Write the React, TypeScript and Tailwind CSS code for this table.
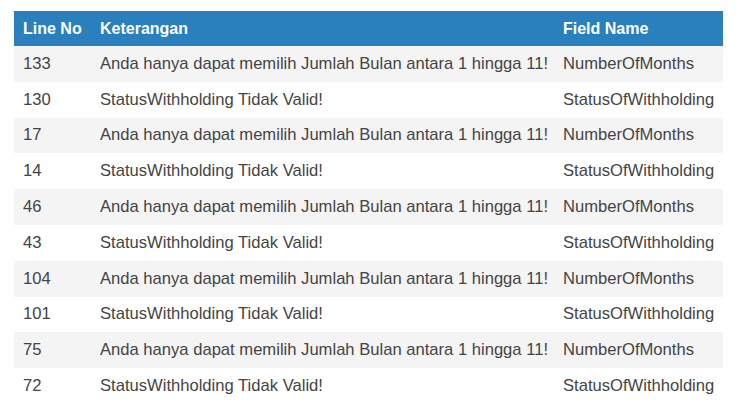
import React from "react";

const rows: [string, string, string][] = [
  ["133", "Anda hanya dapat memilih Jumlah Bulan antara 1 hingga 11!", "NumberOfMonths"],
  ["130", "StatusWithholding Tidak Valid!", "StatusOfWithholding"],
  ["17", "Anda hanya dapat memilih Jumlah Bulan antara 1 hingga 11!", "NumberOfMonths"],
  ["14", "StatusWithholding Tidak Valid!", "StatusOfWithholding"],
  ["46", "Anda hanya dapat memilih Jumlah Bulan antara 1 hingga 11!", "NumberOfMonths"],
  ["43", "StatusWithholding Tidak Valid!", "StatusOfWithholding"],
  ["104", "Anda hanya dapat memilih Jumlah Bulan antara 1 hingga 11!", "NumberOfMonths"],
  ["101", "StatusWithholding Tidak Valid!", "StatusOfWithholding"],
  ["75", "Anda hanya dapat memilih Jumlah Bulan antara 1 hingga 11!", "NumberOfMonths"],
  ["72", "StatusWithholding Tidak Valid!", "StatusOfWithholding"],
];

export default function App() {
  return (
    <div className="bg-white w-[738px] h-[418px] pt-[11px] pl-[14px]" style={{ fontFamily: '"Liberation Sans", Arial, sans-serif' }}>
      <div className="w-[709px] text-[16.6px] leading-[20px]">
        <div className="flex bg-[#2a7fbd] text-white font-bold h-[35px] items-center text-[16px]">
          <div className="w-[77px] pl-[9px]">Line No</div>
          <div className="w-[463px] pl-[9px]">Keterangan</div>
          <div className="flex-1 pl-[9px]">Field Name</div>
        </div>
        {rows.map((r, i) => (
          <div key={i} className={`flex items-center h-[35.8px] text-[#444444] ${i % 2 === 0 ? "bg-[#f4f4f4]" : "bg-white"}`}>
            <div className="w-[77px] pl-[9px]">{r[0]}</div>
            <div className="w-[463px] pl-[9px] whitespace-nowrap">{r[1]}</div>
            <div className="flex-1 pl-[9px] whitespace-nowrap">{r[2]}</div>
          </div>
        ))}
      </div>
    </div>
  );
}
